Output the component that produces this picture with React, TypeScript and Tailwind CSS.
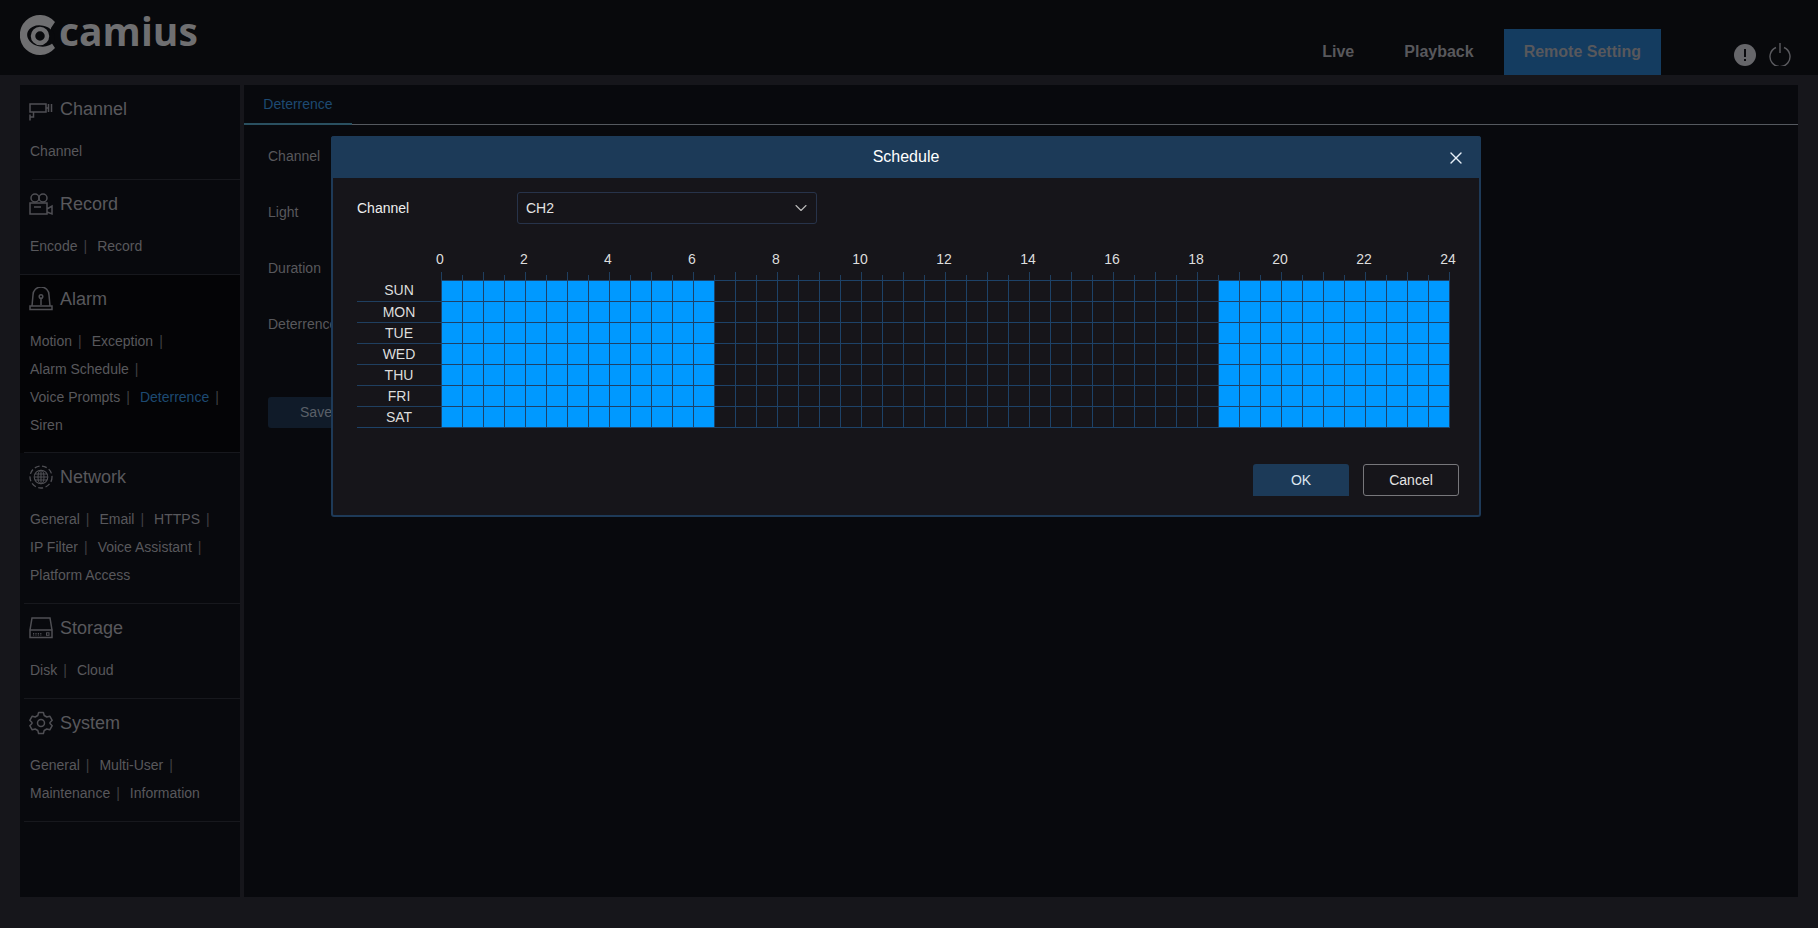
import { ChevronDown, X } from 'lucide-react'
import type { ReactNode } from 'react'

const iconProps = {
  width: 24,
  height: 24,
  viewBox: '0 0 24 24',
  fill: 'none',
  stroke: '#4f4f54',
  strokeWidth: 1.5,
}

function CameraIcon() {
  return (
    <svg {...iconProps}>
      <path d="M1 7h16v8H1zM4.5 15v5H1M1 17.5v6" />
      <path d="M17 11h2M19.5 7v8M22.5 7v8" />
    </svg>
  )
}

function RecordIcon() {
  return (
    <svg {...iconProps}>
      <circle cx="6" cy="6" r="4" />
      <circle cx="14" cy="6" r="4" />
      <path d="M1 11h17v11H1zM18 17l5-3v8l-5-2M5 15h7" />
    </svg>
  )
}

function AlarmIcon() {
  return (
    <svg {...iconProps}>
      <path d="M3 19l1-11a8 8 0 0 1 16 0l1 11M1 22.5v-3.5h22v3.5z" />
      <circle cx="12" cy="9.5" r="1.8" />
      <path d="M12 11v7" />
    </svg>
  )
}

function NetworkIcon() {
  return (
    <svg {...iconProps} strokeWidth={1.1}>
      <circle cx="12" cy="12" r="6.8" />
      <ellipse cx="12" cy="12" rx="3" ry="6.8" />
      <path d="M5.2 12h13.6M6 9h12M6 15h12M12 5v14" />
      <circle cx="12" cy="12" r="11" strokeDasharray="5 2.5" strokeWidth={1.3} />
    </svg>
  )
}

function StorageIcon() {
  return (
    <svg {...iconProps}>
      <path d="M1 14L3 2h18l2 12M1 14h22v7.5H1z" />
      <path d="M4 17.5h9M4 19h9" strokeDasharray="1.2 1.2" strokeWidth={1} />
      <rect x="17.5" y="16.8" width="2.5" height="2.5" strokeWidth={1} />
    </svg>
  )
}

function GearIcon() {
  return (
    <svg {...iconProps}>
      <circle cx="12" cy="12" r="3.5" />
      <path d="M9.6 1.5h4.8l.8 3 2.6 1.5 3-.8 2.4 4.1-2.2 2.2v1l2.2 2.2-2.4 4.1-3-.8-2.6 1.5-.8 3H9.6l-.8-3-2.6-1.5-3 .8-2.4-4.1L3 12.5v-1L.8 9.3l2.4-4.1 3 .8 2.6-1.5z" strokeLinejoin="round" />
    </svg>
  )
}

function Logo() {
  return (
    <div className="flex items-start pl-[20px] pt-[15px]">
      <svg width="38" height="40" viewBox="0 0 38 40">
        <path d="M35 7A20 20 0 1 0 35 33L31 27V13z" fill="#6f6f71" />
        <ellipse cx="21" cy="21" rx="14" ry="10.5" fill="#08090c" transform="rotate(12 21 21)" />
        <circle cx="20" cy="21" r="7" fill="none" stroke="#6f6f71" strokeWidth="4.5" />
      </svg>
      <span className="-mt-[4px] ml-[1px] text-[39px] leading-[40px] font-bold text-[#6f6f71] font-['Open_Sans',sans-serif]">
        camius
      </span>
    </div>
  )
}

type SubLink = { label: string; sep?: boolean; active?: boolean }

type Section = {
  title: string
  icon: ReactNode
  lines: SubLink[][]
  rule: string
  dark?: boolean
}

const sections: Section[] = [
  { title: 'Channel', icon: <CameraIcon />, rule: 'ml-[12px]', lines: [[{ label: 'Channel' }]] },
  {
    title: 'Record',
    icon: <RecordIcon />,
    rule: '',
    lines: [[{ label: 'Encode', sep: true }, { label: 'Record' }]],
  },
  {
    title: 'Alarm',
    icon: <AlarmIcon />,
    rule: 'ml-[4px]',
    dark: true,
    lines: [
      [{ label: 'Motion', sep: true }, { label: 'Exception', sep: true }],
      [{ label: 'Alarm Schedule', sep: true }],
      [{ label: 'Voice Prompts', sep: true }, { label: 'Deterrence', sep: true, active: true }],
      [{ label: 'Siren' }],
    ],
  },
  {
    title: 'Network',
    icon: <NetworkIcon />,
    rule: 'ml-[4px]',
    lines: [
      [{ label: 'General', sep: true }, { label: 'Email', sep: true }, { label: 'HTTPS', sep: true }],
      [{ label: 'IP Filter', sep: true }, { label: 'Voice Assistant', sep: true }],
      [{ label: 'Platform Access' }],
    ],
  },
  {
    title: 'Storage',
    icon: <StorageIcon />,
    rule: 'ml-[4px]',
    lines: [[{ label: 'Disk', sep: true }, { label: 'Cloud' }]],
  },
  {
    title: 'System',
    icon: <GearIcon />,
    rule: 'ml-[4px]',
    lines: [
      [{ label: 'General', sep: true }, { label: 'Multi-User', sep: true }],
      [{ label: 'Maintenance', sep: true }, { label: 'Information' }],
    ],
  },
]

function Sidebar() {
  return (
    <aside className="w-[220px] shrink-0 bg-[#08090d]">
      {sections.map((s) => (
        <section key={s.title} className={`pt-[8px] ${s.dark ? 'bg-[#040406]' : ''}`}>
          <div className="flex h-[32px] items-center gap-[7px] pl-[9px]">
            {s.icon}
            <span className="text-[18px] text-[#58585c]">{s.title}</span>
          </div>
          <div className={`pl-[10px] pt-[12px] text-[14px] text-[#58585c] ${s.dark ? 'pb-[13px]' : 'pb-[14px]'}`}>
            {s.lines.map((line, i) => (
              <div key={i} className="flex h-[28px] items-center">
                {line.map((l) => (
                  <span key={l.label} className="flex items-center">
                    <span className={l.active ? 'text-[#1d4a72]' : ''}>{l.label}</span>
                    {l.sep && <span className="ml-[6px] mr-[10px] text-[#3f3f43]">|</span>}
                  </span>
                ))}
              </div>
            ))}
          </div>
          <div className={`h-px bg-[#17181d] ${s.rule}`} />
        </section>
      ))}
    </aside>
  )
}

const days = ['SUN', 'MON', 'TUE', 'WED', 'THU', 'FRI', 'SAT']
const hours = [0, 2, 4, 6, 8, 10, 12, 14, 16, 18, 20, 22, 24]
const slots = Array.from({ length: 48 }, (_, i) => i)

function isOn(slot: number) {
  return slot < 13 || slot >= 37
}

function ScheduleGrid() {
  return (
    <div className="mt-[25px]">
      <div className="flex pl-[41px]">
        {hours.map((h) => (
          <span key={h} className="h-[20px] w-[84px] shrink-0 text-center text-[14px] leading-[20px] text-[#dddddd]">
            {h}
          </span>
        ))}
      </div>
      <div className="mt-[3px] flex h-[8px] pl-[84px]">
        {slots.map((i) => (
          <span
            key={i}
            className={`w-[21px] shrink-0 self-end border-l border-[#1f3f60] ${i % 2 === 0 ? 'h-[8px]' : 'h-[5px]'}`}
          />
        ))}
        <span className="h-[8px] w-px shrink-0 bg-[#1f3f60]" />
      </div>
      {days.map((d, row) => (
        <div key={d} className="flex">
          <div
            className={`h-[21px] w-[84px] shrink-0 border-t text-center text-[14px] text-[#dddddd] ${
              row === 0 ? 'border-transparent leading-[18px]' : 'border-[#1f3f60] leading-[20px]'
            }`}
          >
            {d}
          </div>
          {slots.map((i) => (
            <div
              key={i}
              className={`h-[21px] w-[21px] shrink-0 border-l border-t border-[#1d4268] ${isOn(i) ? 'bg-[#0099ff]' : ''}`}
            />
          ))}
          <div className="h-[21px] w-px shrink-0 bg-[#1d4268]" />
        </div>
      ))}
      <div className="h-px w-[1093px] bg-[#1d4268]" />
    </div>
  )
}

function ScheduleModal() {
  return (
    <div className="absolute left-[331px] top-[136px] z-10 h-[381px] w-[1150px] rounded-[3px] border-2 border-t-0 border-[#1e3a58] bg-[#16151a]">
      <div className="relative -mx-[2px] flex h-[42px] items-center justify-center rounded-t-[3px] bg-[#1c3a58]">
        <span className="text-[16px] text-white">Schedule</span>
        <X size={20} strokeWidth={1.6} color="#e8f0f8" className="absolute right-[15px] top-[12px]" />
      </div>
      <div className="px-[24px] pt-[14px]">
        <div className="flex items-center">
          <span className="w-[160px] text-[14px] text-[#eeeeee]">Channel</span>
          <div className="flex h-[32px] w-[300px] items-center justify-between rounded-[3px] border border-[#27334a] pl-[8px] pr-[5px] text-[14px] text-[#e4e4e4]">
            CH2
            <ChevronDown size={20} strokeWidth={1.3} color="#bbbbbb" />
          </div>
        </div>
        <ScheduleGrid />
        <div className="mt-[36px] -mr-[4px] flex justify-end gap-[14px]">
          <button className="h-[32px] w-[96px] rounded-t-[3px] bg-[#1c3a58] text-[14px] text-[#dce6f0]">OK</button>
          <button className="h-[32px] w-[96px] rounded-[3px] border border-[#77777b] text-[14px] text-[#e4e4e4]">
            Cancel
          </button>
        </div>
      </div>
    </div>
  )
}

export default function App() {
  return (
    <div className="relative flex h-[928px] flex-col overflow-hidden bg-[#16161b] font-['Liberation_Sans',Arial,sans-serif]">
      <header className="flex h-[75px] shrink-0 justify-between bg-[#08090c]">
        <Logo />
        <div className="flex items-end pr-[27px] text-[16px] font-bold text-[#58585c]">
          <span className="mr-[50px] flex h-[46px] items-center">Live</span>
          <span className="mr-[30px] flex h-[46px] items-center">Playback</span>
          <span className="flex h-[46px] items-center bg-[#143c60] px-[20px]">Remote Setting</span>
          <div className="mb-[9px] ml-[73px] flex items-center gap-[13px]">
            <svg width="22" height="22" viewBox="0 0 22 22">
              <circle cx="11" cy="11" r="11" fill="#66666a" />
              <rect x="10" y="5" width="2" height="8" fill="#0a0a0e" />
              <rect x="10" y="15" width="2" height="2" fill="#0a0a0e" />
            </svg>
            <svg width="22" height="23" viewBox="0 0 22 23" fill="none" stroke="#5b5b60" strokeWidth="1.4">
              <path d="M7 4.5a10 10 0 1 0 8 0M11 0v10" />
            </svg>
          </div>
        </div>
      </header>
      <div className="mx-[20px] mb-[31px] mt-[10px] flex min-h-0 flex-1 gap-[4px]">
        <Sidebar />
        <main className="flex-1 bg-[#08090d]">
          <div className="flex h-[40px] border-b border-[#55595f]">
            <div className="flex h-[40px] w-[108px] items-center justify-center border-b-2 border-[#2a5060] pt-[1px] text-[14px] text-[#1d4a72]">
              Deterrence
            </div>
          </div>
          <div className="pl-[24px] pt-[3px] text-[14px] text-[#58585c]">
            {['Channel', 'Light', 'Duration', 'Deterrence'].map((f) => (
              <div key={f} className="flex h-[56px] items-center">
                {f}
              </div>
            ))}
            <button className="mt-[45px] h-[31px] w-[96px] rounded-[3px] bg-[#101b29] text-[#5a6068]">Save</button>
          </div>
        </main>
      </div>
      <ScheduleModal />
    </div>
  )
}
